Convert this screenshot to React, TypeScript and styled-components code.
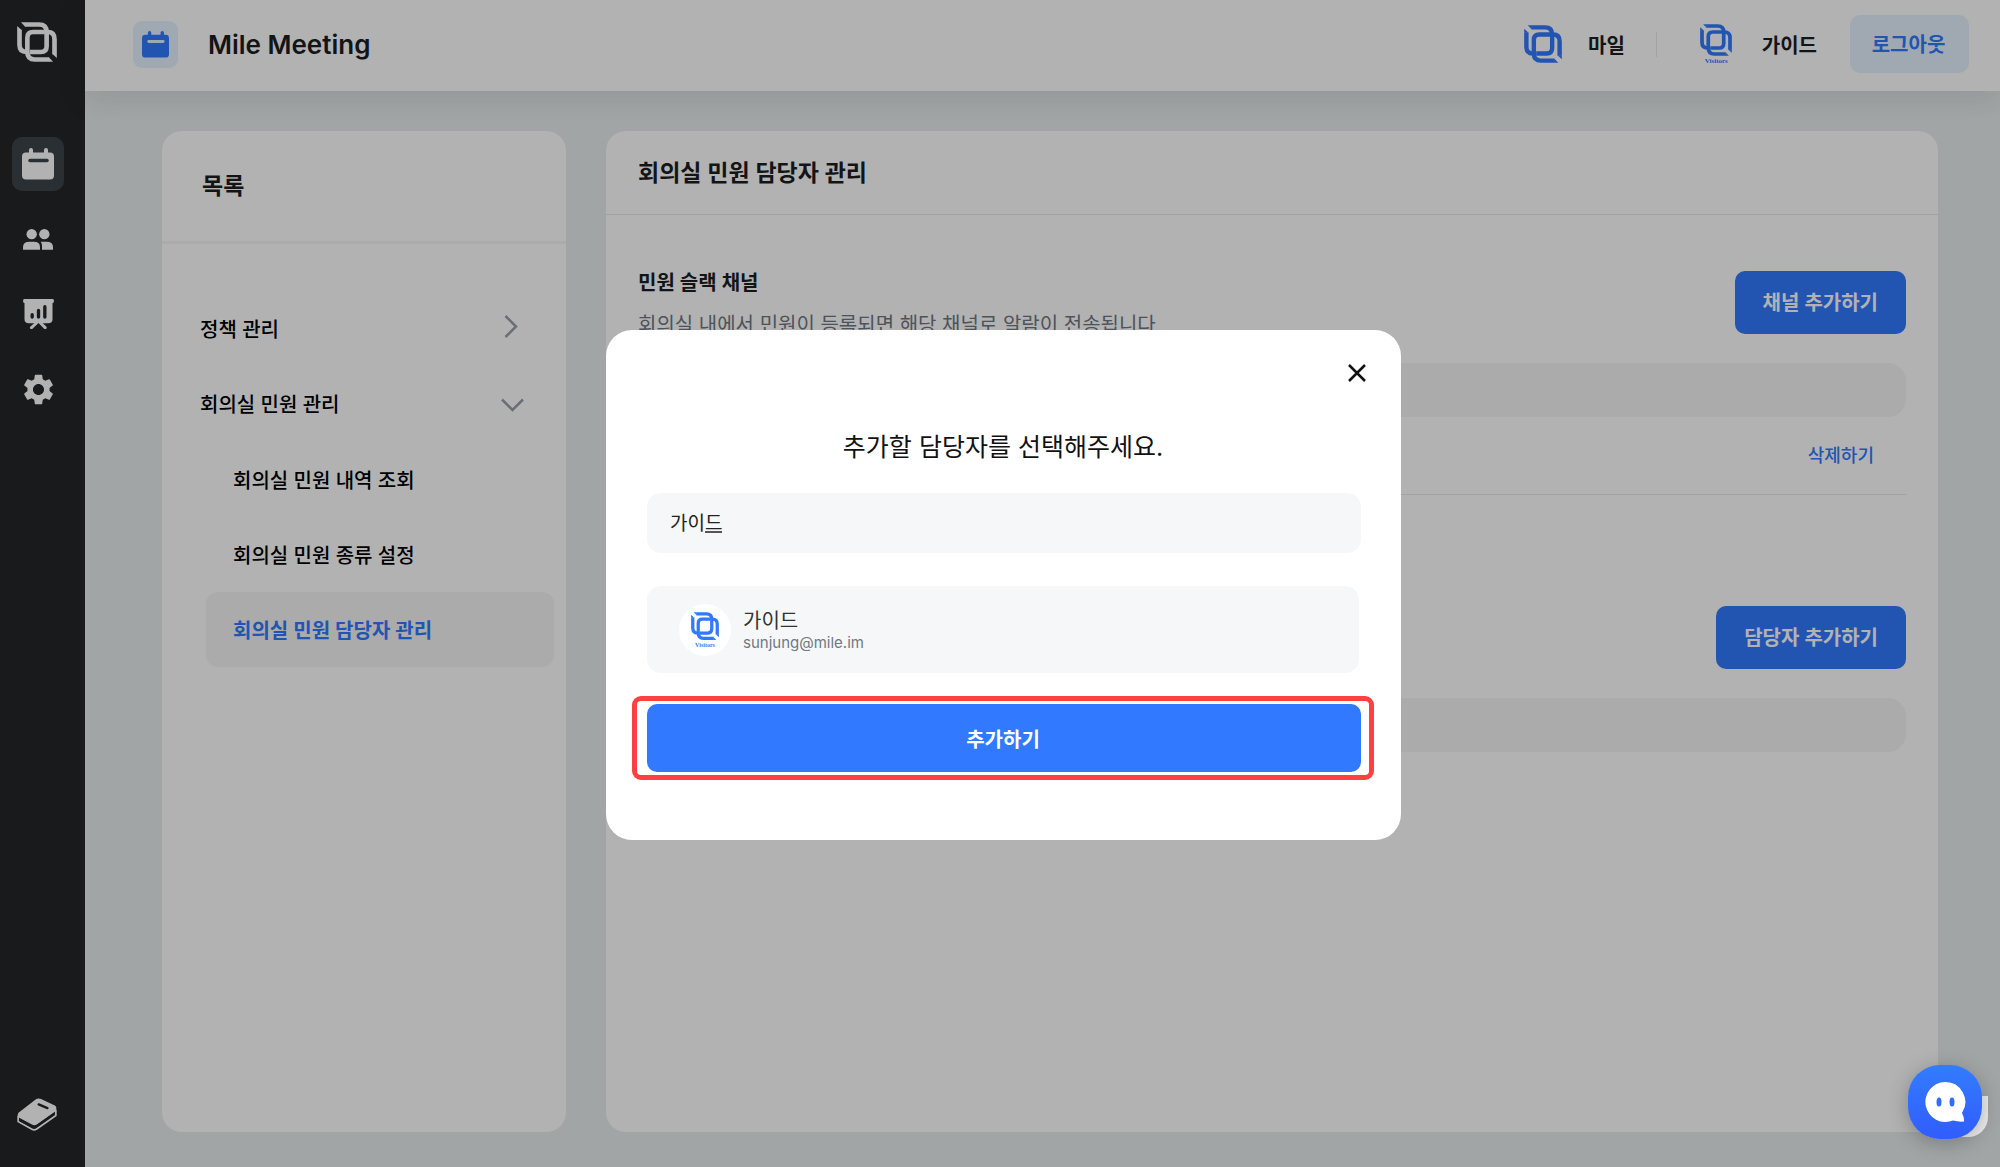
import React, { useState } from "react";
import styled, { createGlobalStyle } from "styled-components";
import { MdSettings } from "react-icons/md";

const color = {
  primary: "#3179ff",
  primarySoft: "#e5f2ff",
  page: "#e8edee",
  dark: "#242629",
  darkActive: "#3c444a",
  ink: "#1b1d1f",
  muted: "#6f7783",
  chevron: "#98a0aa",
  line: "#e4eaeb",
  field: "#f5f7f9",
  annotation: "#ff4040",
};

const GlobalStyle = createGlobalStyle`
  *, *::before, *::after { box-sizing: border-box; }
  body {
    margin: 0;
    font-family: Inter, "Noto Sans CJK KR", sans-serif;
    font-size: 20px;
    line-height: 24px;
    color: ${color.ink};
  }
  button, input { font: inherit; color: inherit; }
  button { border: 0; padding: 0; background: none; cursor: pointer; }
  a { color: inherit; text-decoration: none; }
  h1, h2, h3, p, ul { margin: 0; padding: 0; }
  ul { list-style: none; }
  svg { display: block; }
`;

const Shell = styled.div`
  display: flex;
  min-height: 100vh;
  background: ${color.page};
`;

const Rail = styled.aside`
  display: flex;
  flex-direction: column;
  flex: 0 0 85px;
  padding: 21px 12px 36px 11px;
  background: ${color.dark};
  color: #fff;
`;

const RailLogo = styled.a`
  width: 52px;
  height: 42px;
  display: grid;
  place-items: center;
`;

const RailNav = styled.nav`
  display: flex;
  flex-direction: column;
  gap: 21px;
  margin: 74px 0 0 1px;
`;

const RailItem = styled.a<{ $active?: boolean }>`
  display: grid;
  place-items: center;
  width: 52px;
  height: 54px;
  border-radius: 10px;
  background: ${(p) => (p.$active ? color.darkActive : "transparent")};
`;

const RailFoot = styled.a`
  display: grid;
  place-items: center;
  width: 52px;
  height: 34px;
  margin-top: auto;
`;

const Main = styled.div`
  display: flex;
  flex-direction: column;
  flex: 1;
  min-width: 0;
`;

const Header = styled.header`
  display: flex;
  align-items: center;
  height: 91px;
  padding: 0 31px 3px 48px;
  background: #fff;
  box-shadow: 0 8px 30px rgba(40, 20, 50, 0.1);
`;

const AppBadge = styled.span`
  display: grid;
  place-items: center;
  width: 45px;
  height: 47px;
  border-radius: 9px;
  background: ${color.primarySoft};
  color: ${color.primary};
`;

const AppTitle = styled.h1`
  margin-left: 30px;
  padding-top: 2px;
  font-size: 26px;
  line-height: 32px;
  font-weight: 600;
`;

const Account = styled.div`
  display: flex;
  align-items: center;
  margin-left: auto;
  font-weight: 600;
`;

const AccountItem = styled.div<{ $gap: number }>`
  display: flex;
  align-items: center;
  gap: ${(p) => p.$gap}px;
`;

const AccountName = styled.span`
  padding-top: 3px;
`;

const Separator = styled.span`
  width: 1px;
  height: 25px;
  margin: 0 29px 0 31px;
  background: ${color.line};
`;

const Avatar = styled.span<{ $size: number }>`
  display: flex;
  flex-direction: column;
  align-items: center;
  justify-content: center;
  gap: 2px;
  width: ${(p) => p.$size}px;
  height: ${(p) => p.$size}px;
  border-radius: 50%;
  background: #fff;
  color: ${color.primary};
`;

const AvatarCaption = styled.span<{ $size: number }>`
  font-family: "Liberation Serif", serif;
  font-size: ${(p) => p.$size}px;
  line-height: ${(p) => p.$size}px;
  font-weight: 700;
`;

const LogoutButton = styled.button`
  width: 119px;
  height: 58px;
  margin-left: 33px;
  padding: 2px 2px 0 0;
  border-radius: 10px;
  background: ${color.primarySoft};
  color: ${color.primary};
  font-weight: 600;
`;

const Content = styled.main`
  display: flex;
  flex: 1;
  gap: 40px;
  padding: 40px 62px 35px 77px;
`;

const Panel = styled.section<{ $width?: number }>`
  flex: ${(p) => (p.$width ? `0 0 ${p.$width}px` : "1")};
  min-width: 0;
  border-radius: 20px;
  background: #fff;
`;

const PanelTitle = styled.h2<{ $tall?: boolean }>`
  display: flex;
  align-items: center;
  height: ${(p) => (p.$tall ? 113 : 84)}px;
  padding: 0 ${(p) => (p.$tall ? 40 : 32)}px;
  border-bottom: ${(p) => (p.$tall ? "3px solid #f5f5f5" : `1px solid ${color.line}`)};
  font-size: 23px;
  font-weight: 600;
`;

const Menu = styled.ul`
  padding: 48px 12px 0 0;
`;

const MenuGroup = styled.button`
  display: flex;
  align-items: center;
  justify-content: space-between;
  width: 100%;
  height: 75px;
  padding: 0 30px 0 38px;
  font-weight: 500;
  color: #000;
`;

const ChevronBox = styled.span<{ $open?: boolean }>`
  display: flex;
  width: 23px;
  padding: ${(p) => (p.$open ? "0" : "0 0 6px 3px")};
  color: ${color.chevron};
`;

const SubLink = styled.a<{ $active?: boolean }>`
  display: flex;
  align-items: center;
  height: 75px;
  margin-left: 44px;
  padding: 2px 0 0 27px;
  border-radius: 12px;
  background: ${(p) => (p.$active ? "#f5f5f5" : "transparent")};
  color: ${(p) => (p.$active ? color.primary : "#000")};
  font-weight: ${(p) => (p.$active ? 600 : 500)};
`;

const Sections = styled.div`
  display: flex;
  flex-direction: column;
  gap: 111px;
  padding: 56px 32px;
`;

const SectionHead = styled.div`
  display: flex;
  justify-content: space-between;
  align-items: flex-start;
  height: 64px;
`;

const SectionTitle = styled.h3`
  font-size: 20px;
  font-weight: 600;
`;

const SectionText = styled.p`
  margin-top: 18px;
  color: ${color.muted};
`;

const PrimaryButton = styled.button`
  height: 63px;
  margin-left: auto;
  padding: 1px 28px 0;
  border-radius: 10px;
  background: ${color.primary};
  color: #fff;
  font-weight: 600;
`;

const ListHead = styled.div`
  height: 54px;
  margin-top: 28px;
  border-radius: 18px;
  background: #f5f5f5;
`;

const ListRow = styled.div`
  display: flex;
  align-items: center;
  justify-content: flex-end;
  height: 78px;
  padding-right: 32px;
  border-bottom: 1px solid ${color.line};
`;

const TextButton = styled.button`
  color: ${color.primary};
  font-size: 18px;
  font-weight: 500;
`;

const Backdrop = styled.div`
  position: fixed;
  inset: 0;
  display: grid;
  place-items: center;
  padding: 3px 0 0 7px;
  background: rgba(0, 0, 0, 0.3);
`;

const Dialog = styled.div`
  display: flex;
  flex-direction: column;
  width: 795px;
  max-width: 100%;
  padding: 27px 40px 68px 41px;
  border-radius: 26px;
  background: #fff;
`;

const CloseButton = styled.button`
  display: grid;
  place-items: center;
  align-self: flex-end;
  width: 32px;
  height: 32px;
  margin-right: -12px;
`;

const DialogTitle = styled.h2`
  margin-top: 42px;
  padding-right: 2px;
  font-size: 25px;
  line-height: 32px;
  font-weight: 400;
  text-align: center;
  color: #111;
`;

const SearchField = styled.label`
  position: relative;
  display: block;
  margin-top: 30px;
`;

const SearchInput = styled.input`
  width: 100%;
  height: 60px;
  padding: 0 23px 4px;
  border: 0;
  border-radius: 14px;
  outline: none;
  background: ${color.field};
  font-size: 19px;
  color: #222;
`;

const CompositionMark = styled.span`
  position: absolute;
  left: 58px;
  top: 38px;
  width: 17px;
  height: 2px;
  background: #555;
`;

const Results = styled.ul`
  margin-top: 33px;
  padding-right: 2px;
`;

const ResultItem = styled.button`
  display: flex;
  align-items: center;
  gap: 12px;
  width: 100%;
  height: 87px;
  padding: 0 32px;
  border-radius: 14px;
  background: ${color.field};
  text-align: left;
`;

const ResultText = styled.span`
  display: flex;
  flex-direction: column;
  padding-top: 3px;
`;

const ResultName = styled.span`
  color: #333;
`;

const ResultMail = styled.span`
  font-size: 15px;
  line-height: 20px;
  color: ${color.muted};
`;

const SubmitArea = styled.div`
  position: relative;
  display: flex;
  margin-top: 31px;

  &::after {
    content: "";
    position: absolute;
    inset: -8px -13px -8px -15px;
    border: 5px solid ${color.annotation};
    border-radius: 9px;
    pointer-events: none;
  }
`;

const SubmitButton = styled.button`
  flex: 1;
  height: 68px;
  padding: 4px 2px 0 0;
  border-radius: 10px;
  background: ${color.primary};
  color: #fff;
  font-weight: 600;
`;

const ChatTab = styled.span`
  position: fixed;
  right: 12px;
  bottom: 30px;
  width: 60px;
  height: 41px;
  border-radius: 0 0 20px 0;
  background: #ececec;
`;

const ChatButton = styled.button`
  position: fixed;
  right: 18px;
  bottom: 28px;
  display: grid;
  place-items: center;
  width: 74px;
  height: 74px;
  border-radius: 32px;
  background: linear-gradient(#327cff, #315cff);
  box-shadow: 0 4px 20px rgba(0, 0, 0, 0.25);
`;

function MileLogo({ size }: { size: number }) {
  return (
    <svg width={size} height={size} viewBox="0 0 112 112" aria-hidden="true">
      <g fill="none" stroke="currentColor" strokeWidth="13">
        <path d="M7 22V64Q7 84 26 84" />
        <path d="M22 7H62Q83 7 83 28V68Q83 84 67 84H36" />
        <path d="M86 28Q105 28 105 48V90" />
        <path d="M90 105H50Q29 105 29 84V44Q29 28 45 28H78" />
      </g>
      <g fill="currentColor">
        <path d="M0.500 11L13.500 23H0.500ZM11 0.500H23V13.500ZM111.500 101L98.500 89H111.500ZM101 111.500L89 98.500V111.500Z" />
      </g>
    </svg>
  );
}

function CalendarIcon({ size, slot }: { size: number; slot: string }) {
  return (
    <svg width={size} height={size} viewBox="0 0 32 32" aria-hidden="true">
      <rect x="0" y="4.500" width="32" height="27" rx="4" fill="currentColor" />
      <path d="M9 7V2M24 7V2" stroke="currentColor" strokeWidth="4" strokeLinecap="round" />
      <path d="M8 12.500H25" stroke={slot} strokeWidth="3.500" strokeLinecap="round" />
    </svg>
  );
}

function PeopleIcon() {
  return (
    <svg width="30" height="21" viewBox="0 0 90 62" fill="currentColor" aria-hidden="true">
      <circle cx="26" cy="15" r="15.500" />
      <circle cx="64" cy="15" r="15.500" />
      <path d="M0 62V54Q0 38 20 38H32Q51 38 51 54V62Z" />
      <path d="M53 38H70Q90 38 90 54V62H57V50Q57 43 53 38Z" />
    </svg>
  );
}

function PresentationIcon() {
  return (
    <svg width="31" height="30" viewBox="0 0 92 90" aria-hidden="true">
      <rect width="92" height="12" rx="4" fill="currentColor" />
      <path d="M4 8H88V60Q88 73 75 73H17Q4 73 4 60Z" fill="currentColor" />
      <path d="M40 72L25 86M52 72L66 86" stroke="currentColor" strokeWidth="9" strokeLinecap="round" />
      <path d="M27 47V54M46 34V54M65 23V54" stroke={color.dark} strokeWidth="10" strokeLinecap="round" />
    </svg>
  );
}

function EraserIcon() {
  return (
    <svg width="40" height="33" viewBox="0 0 118 98" fill="none" aria-hidden="true">
      <path d="M3 52V70L44 93Q51 97 58 92L115 52V34" stroke="currentColor" strokeWidth="5" strokeLinejoin="round" />
      <path
        d="M4 44L54 5Q62 -1 71 3L112 22Q118 25 116 33L113 40L60 78Q52 84 44 79L6 59Q-1 50 4 44Z"
        fill="currentColor"
      />
      <path d="M6 65L46 86Q51 89 56 85L110 47" stroke={color.dark} strokeWidth="6" />
      <path d="M64 19L90 30" stroke={color.dark} strokeWidth="7" strokeLinecap="round" />
    </svg>
  );
}

function Chevron({ open }: { open?: boolean }) {
  return (
    <ChevronBox $open={open}>
      {open ? (
        <svg width="23" height="14" viewBox="0 0 23 14" fill="none" stroke="currentColor" strokeWidth="2.500">
          <path d="M1 1.500L11.500 12L22 1.500" />
        </svg>
      ) : (
        <svg width="14" height="23" viewBox="0 0 14 23" fill="none" stroke="currentColor" strokeWidth="2.500">
          <path d="M1.500 1L12 11.500L1.500 22" />
        </svg>
      )}
    </ChevronBox>
  );
}

function ChatFace() {
  return (
    <svg width="42" height="42" viewBox="0 0 42 42" aria-hidden="true">
      <path d="M21 1A20 20 0 1 0 29 39.500Q35 41 40 40.500Q40.500 37 38 32A20 20 0 0 0 21 1Z" fill="#fff" />
      <ellipse cx="15" cy="21" rx="2.500" ry="4.500" fill="#316cff" />
      <ellipse cx="28" cy="21" rx="2.500" ry="4.500" fill="#316cff" />
    </svg>
  );
}

const subMenu = ["회의실 민원 내역 조회", "회의실 민원 종류 설정", "회의실 민원 담당자 관리"];

export default function App() {
  const [query, setQuery] = useState("가이드");

  return (
    <>
      <GlobalStyle />
      <Shell>
        <Rail>
          <RailLogo href="#" aria-label="Mile">
            <MileLogo size={40} />
          </RailLogo>
          <RailNav>
            <RailItem href="#" $active aria-label="회의실">
              <CalendarIcon size={32} slot={color.darkActive} />
            </RailItem>
            <RailItem href="#" aria-label="구성원">
              <PeopleIcon />
            </RailItem>
            <RailItem href="#" aria-label="통계">
              <PresentationIcon />
            </RailItem>
            <RailItem href="#" aria-label="설정">
              <MdSettings size={37} />
            </RailItem>
          </RailNav>
          <RailFoot href="#" aria-label="가이드북">
            <EraserIcon />
          </RailFoot>
        </Rail>

        <Main>
          <Header>
            <AppBadge>
              <CalendarIcon size={27} slot={color.primarySoft} />
            </AppBadge>
            <AppTitle>Mile Meeting</AppTitle>
            <Account>
              <AccountItem $gap={26}>
                <Avatar $size={38}>
                  <MileLogo size={38} />
                </Avatar>
                <AccountName>마일</AccountName>
              </AccountItem>
              <Separator />
              <AccountItem $gap={15}>
                <Avatar $size={61}>
                  <MileLogo size={32} />
                  <AvatarCaption $size={7}>Visitors</AvatarCaption>
                </Avatar>
                <AccountName>가이드</AccountName>
              </AccountItem>
              <LogoutButton type="button">로그아웃</LogoutButton>
            </Account>
          </Header>

          <Content>
            <Panel $width={404}>
              <PanelTitle $tall>목록</PanelTitle>
              <Menu>
                <li>
                  <MenuGroup type="button">
                    정책 관리
                    <Chevron />
                  </MenuGroup>
                </li>
                <li>
                  <MenuGroup type="button" aria-expanded="true">
                    회의실 민원 관리
                    <Chevron open />
                  </MenuGroup>
                  <ul>
                    {subMenu.map((label, i) => (
                      <li key={label}>
                        <SubLink href="#" $active={i === subMenu.length - 1}>
                          {label}
                        </SubLink>
                      </li>
                    ))}
                  </ul>
                </li>
              </Menu>
            </Panel>

            <Panel>
              <PanelTitle>회의실 민원 담당자 관리</PanelTitle>
              <Sections>
                <div>
                  <SectionHead>
                    <div>
                      <SectionTitle>민원 슬랙 채널</SectionTitle>
                      <SectionText>회의실 내에서 민원이 등록되면 해당 채널로 알람이 전송됩니다</SectionText>
                    </div>
                    <PrimaryButton type="button">채널 추가하기</PrimaryButton>
                  </SectionHead>
                  <ListHead />
                  <ListRow>
                    <TextButton type="button">삭제하기</TextButton>
                  </ListRow>
                </div>
                <div>
                  <SectionHead>
                    <PrimaryButton type="button">담당자 추가하기</PrimaryButton>
                  </SectionHead>
                  <ListHead />
                </div>
              </Sections>
            </Panel>
          </Content>
        </Main>
      </Shell>

      <Backdrop>
        <Dialog role="dialog" aria-modal="true" aria-labelledby="dialog-title">
          <CloseButton type="button" aria-label="닫기">
            <svg width="18" height="18" viewBox="0 0 18 18" stroke="#111" strokeWidth="2.500">
              <path d="M1 1L17 17M17 1L1 17" />
            </svg>
          </CloseButton>
          <DialogTitle id="dialog-title">추가할 담당자를 선택해주세요.</DialogTitle>
          <SearchField>
            <SearchInput
              type="text"
              aria-labelledby="dialog-title"
              value={query}
              onChange={(e) => setQuery(e.target.value)}
            />
            <CompositionMark />
          </SearchField>
          <Results>
            <li>
              <ResultItem type="button">
                <Avatar $size={52}>
                  <MileLogo size={28} />
                  <AvatarCaption $size={6}>Visitors</AvatarCaption>
                </Avatar>
                <ResultText>
                  <ResultName>가이드</ResultName>
                  <ResultMail>sunjung@mile.im</ResultMail>
                </ResultText>
              </ResultItem>
            </li>
          </Results>
          <SubmitArea>
            <SubmitButton type="button">추가하기</SubmitButton>
          </SubmitArea>
        </Dialog>
      </Backdrop>

      <ChatTab />
      <ChatButton type="button" aria-label="채팅 상담">
        <ChatFace />
      </ChatButton>
    </>
  );
}
